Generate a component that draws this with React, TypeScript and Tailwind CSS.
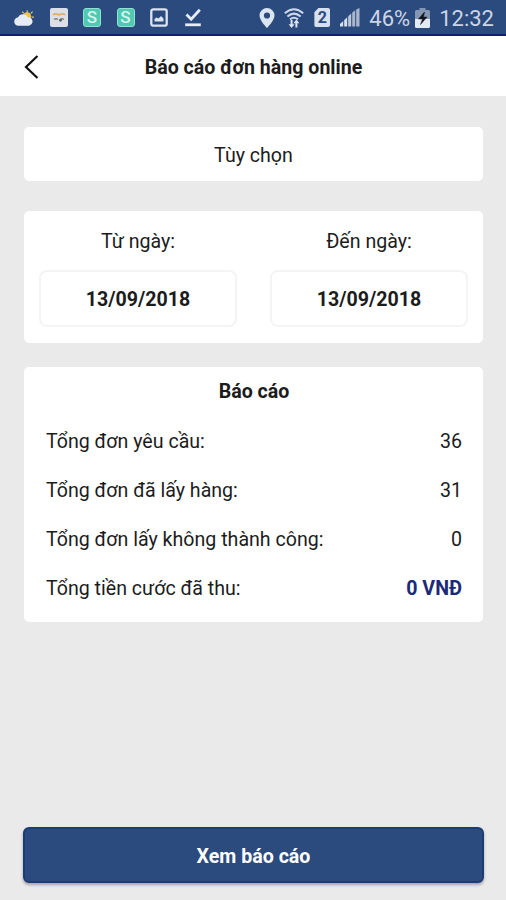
import type { ReactNode } from 'react';

const rows = [
  { label: 'Tổng đơn yêu cầu:', value: '36' },
  { label: 'Tổng đơn đã lấy hàng:', value: '31' },
  { label: 'Tổng đơn lấy không thành công:', value: '0' },
  { label: 'Tổng tiền cước đã thu:', value: '0 VNĐ', strong: true },
];

function WeatherIcon() {
  return (
    <svg width="20" height="18" viewBox="0 0 22 18">
      <g stroke="#e3cf7c" strokeWidth="1.2">
        <path d="M14.5 0.5v3M20.5 2l-2 2M21.8 8h-2.5M9 2l2 2M20 13l-1.5-1.5" />
      </g>
      <circle cx="14.5" cy="7" r="4.2" fill="#e8c650" />
      <path d="M5 17.5a4.6 4.6 0 0 1-.4-9.200 5.700 5.700 0 0 1 10.400-.2 4.700 4.700 0 0 1 1.200 9.400z" fill="#e6edf5" />
    </svg>
  );
}

function FaceIcon() {
  return (
    <svg width="18" height="19" viewBox="0 0 18 19">
      <rect width="18" height="19" rx="2" fill="#dce0e6" />
      <path d="M3 7q2-2 4.500-.5h3q2.500-1.500 4.500.5" fill="none" stroke="#dcb06a" strokeWidth="1.800" />
      <path d="M4 11.500q2-1.500 4 0M10 11.500q2-1.500 4 0" fill="none" stroke="#8a8274" strokeWidth="1.300" />
      <circle cx="10.500" cy="12.300" r="1.400" fill="#555c66" />
    </svg>
  );
}

function ShopIcon() {
  return (
    <div className="flex h-[19px] w-[18px] items-center justify-center rounded-[3px] border border-[#8fe3d2] bg-[#50c9b1] text-[17px] leading-none font-medium text-[#d5f5ee]">
      S
    </div>
  );
}

function ImageIcon() {
  return (
    <svg width="18" height="19" viewBox="0 0 18 19">
      <rect x="1.300" y="1.300" width="15.400" height="16.400" rx="2" fill="none" stroke="#dbe4f1" strokeWidth="2.300" />
      <path d="M4.500 13.500v-2.500l2-1.500 2 1 2.500-2.500 2.500 2.500v3z" fill="#dbe4f1" />
    </svg>
  );
}

function DoneIcon() {
  return (
    <svg width="18" height="19" viewBox="0 0 18 19">
      <path d="M2.500 6.500l4.700 4.700L15.800 1.800" fill="none" stroke="#e6edf7" strokeWidth="2.800" />
      <path d="M1.200 16.800h15.600" stroke="#e6edf7" strokeWidth="2.800" />
    </svg>
  );
}

function PinIcon() {
  return (
    <svg width="16" height="20" viewBox="0 0 16 20">
      <path
        d="M8 0a7.500 7.500 0 0 0-7.500 7.500C.5 12.500 8 20 8 20s7.500-7.500 7.500-12.500A7.500 7.500 0 0 0 8 0zm0 4.400a3.100 3.100 0 1 1 0 6.200 3.100 3.100 0 0 1 0-6.200z"
        fill="#dbe4f1"
      />
    </svg>
  );
}

function WifiIcon() {
  return (
    <svg width="20" height="20" viewBox="0 0 20 20">
      <g fill="none" stroke="#ccd7e8" strokeWidth="2">
        <path d="M.8 5.200q9.200-8 18.400 0" />
        <path d="M3.400 8.400q6.600-5.600 13.200 0" />
        <path d="M6 11.400q4-3.200 8 0" />
      </g>
      <path d="M7.600 20l-3-3.800h2V12h2v4.200h2zM12.400 11.500l3 3.800h-2v4.200h-2v-4.200h-2z" fill="#dbe4f1" />
    </svg>
  );
}

function SimIcon() {
  return (
    <div className="flex h-[19px] w-4 items-center justify-center rounded-[2px] bg-[#d6e0ee] text-base leading-none font-bold text-[#2b4a7d] [clip-path:polygon(25%_0,100%_0,100%_100%,0_100%,0_22%)]">
      2
    </div>
  );
}

function SignalIcon() {
  return (
    <svg width="20" height="19" viewBox="0 0 20 19">
      <path d="M0 18.500v-2.500l3.200-3v5.500zM4.200 18.500v-6.500l3-2.800v9.300z" fill="#d6e0ee" />
      <path d="M8.200 18.500v-10.200l3-2.800v13z" fill="#bcc8da" />
      <path d="M12.200 18.500v-13.900l3-2.400v16.300zM16.200 18.500V1.400l3.300-1.400v18.500z" fill="#a9b7cd" />
    </svg>
  );
}

function BatteryIcon() {
  return (
    <svg width="15" height="20" viewBox="0 0 15 20">
      <path d="M4.500 0h6v2h3q1.500 0 1.500 1.500V11H0V3.500Q0 2 1.500 2h3z" fill="#8496b2" />
      <path d="M0 11h15v7.500q0 1.500-1.500 1.500h-12Q0 20 0 18.500z" fill="#e4eaf3" />
      <path d="M9.500 4L3.500 11h4l-2 5.500 6.500-7.500H8.500z" fill="#10151d" stroke="#10151d" strokeWidth=".5" />
    </svg>
  );
}

function StatusBar() {
  return (
    <div className="flex h-9 items-center justify-between border-b-2 border-[#16187a] bg-[#2b4a7d] pt-px pr-3 pl-3.5 text-[#cbd6e6]">
      <div className="flex items-center gap-[15.500px]">
        <WeatherIcon />
        <FaceIcon />
        <ShopIcon />
        <ShopIcon />
        <ImageIcon />
        <DoneIcon />
      </div>
      <div className="flex items-center text-[22px] leading-none">
        <PinIcon />
        <div className="ml-[9px]"><WifiIcon /></div>
        <div className="ml-2.5"><SimIcon /></div>
        <div className="ml-2.5"><SignalIcon /></div>
        <span className="ml-[9px] pt-0.5">46%</span>
        <div className="ml-[5px]"><BatteryIcon /></div>
        <span className="ml-[9px] pt-0.5">12:32</span>
      </div>
    </div>
  );
}

function Card({ className, children }: { className: string; children: ReactNode }) {
  return <section className={`rounded-[5px] bg-white ${className}`}>{children}</section>;
}

function DateField({ label, value }: { label: string; value: string }) {
  return (
    <div className="flex w-[198px] flex-col items-center">
      <span className="leading-6">{label}</span>
      <button className="mt-4 h-[57px] w-full rounded-lg border-2 border-[#f4f4f4] pt-[3px] font-bold">{value}</button>
    </div>
  );
}

export default function App() {
  return (
    <div className="flex h-[900px] w-[506px] flex-col bg-[#eaeaea] font-[Roboto,sans-serif] text-[19.600px] text-[#1c1c1c]">
      <StatusBar />
      <header className="grid h-[60px] grid-cols-[60px_1fr_60px] items-center bg-white">
        <button className="pt-0.5 pl-6">
          <svg width="16" height="24" viewBox="0 0 16 24" fill="none" stroke="#111" strokeWidth="2.200">
            <path d="M13.500 1L2 12l11.500 11" />
          </svg>
        </button>
        <h1 className="pt-1 pl-px text-center font-bold">Báo cáo đơn hàng online</h1>
      </header>

      <main className="flex flex-1 flex-col pt-[31px] pr-[23px] pb-[17px] pl-6">
        <Card className="flex h-[54px] items-center justify-center pt-[3px]">Tùy chọn</Card>

        <Card className="mt-[30px] flex h-[132px] justify-between px-[15px] pt-[19px]">
          <DateField label="Từ ngày:" value="13/09/2018" />
          <DateField label="Đến ngày:" value="13/09/2018" />
        </Card>

        <Card className="mt-6 h-[255px] pt-[13px] pr-[21px] pl-[22px]">
          <h2 className="text-center leading-6 font-bold">Báo cáo</h2>
          <dl className="mt-[13px]">
            {rows.map((r) => (
              <div key={r.label} className="flex h-[49.200px] items-center justify-between">
                <dt>{r.label}</dt>
                <dd className={r.strong ? 'font-bold text-[#1b2a78]' : ''}>{r.value}</dd>
              </div>
            ))}
          </dl>
        </Card>

        <button className="-mx-px mt-auto h-14 rounded-md border-2 border-[#1c3d74] bg-[#2b4a7d] pt-1 font-bold text-white shadow-[0_2px_3px_rgba(0,0,0,0.3)]">
          Xem báo cáo
        </button>
      </main>
    </div>
  );
}
